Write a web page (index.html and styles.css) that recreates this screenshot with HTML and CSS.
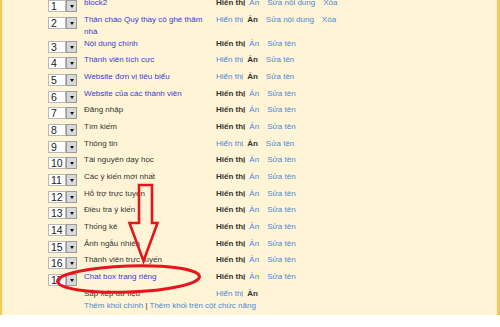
FILE: index.html
```html
<!DOCTYPE html>
<html lang="vi">
<head>
<meta charset="utf-8">
<title>Quản lý khối</title>
<link rel="stylesheet" href="styles.css">
</head>
<body>
<div class="wrap">
  <div class="list">
    <div class="row">
      <div class="sel"><span class="num">1</span><span class="btn"><i></i></span></div>
      <div class="name link">block2</div>
      <div class="acts"><b class="on">Hiển thị</b><a class="off">Ẩn</a><a class="edit">Sửa nội dung</a><a class="del">Xóa</a></div>
    </div>
    <div class="row">
      <div class="sel"><span class="num">2</span><span class="btn"><i></i></span></div>
      <div class="name link">Thân chào Quý thầy cô ghé thăm nhà</div>
      <div class="acts"><a class="on">Hiển thị</a><b class="off">Ẩn</b><a class="edit">Sửa nội dung</a><a class="del">Xóa</a></div>
    </div>
    <div class="row">
      <div class="sel"><span class="num">3</span><span class="btn"><i></i></span></div>
      <div class="name link">Nội dung chính</div>
      <div class="acts"><b class="on">Hiển thị</b><a class="off">Ẩn</a><a class="edit">Sửa tên</a></div>
    </div>
    <div class="row">
      <div class="sel"><span class="num">4</span><span class="btn"><i></i></span></div>
      <div class="name link">Thành viên tích cực</div>
      <div class="acts"><a class="on">Hiển thị</a><b class="off">Ẩn</b><a class="edit">Sửa tên</a></div>
    </div>
    <div class="row">
      <div class="sel"><span class="num">5</span><span class="btn"><i></i></span></div>
      <div class="name link">Website đơn vị tiêu biểu</div>
      <div class="acts"><a class="on">Hiển thị</a><b class="off">Ẩn</b><a class="edit">Sửa tên</a></div>
    </div>
    <div class="row">
      <div class="sel"><span class="num">6</span><span class="btn"><i></i></span></div>
      <div class="name link">Website của các thành viên</div>
      <div class="acts"><b class="on">Hiển thị</b><a class="off">Ẩn</a><a class="edit">Sửa tên</a></div>
    </div>
    <div class="row">
      <div class="sel"><span class="num">7</span><span class="btn"><i></i></span></div>
      <div class="name">Đăng nhập</div>
      <div class="acts"><b class="on">Hiển thị</b><a class="off">Ẩn</a><a class="edit">Sửa tên</a></div>
    </div>
    <div class="row">
      <div class="sel"><span class="num">8</span><span class="btn"><i></i></span></div>
      <div class="name">Tìm kiếm</div>
      <div class="acts"><b class="on">Hiển thị</b><a class="off">Ẩn</a><a class="edit">Sửa tên</a></div>
    </div>
    <div class="row">
      <div class="sel"><span class="num">9</span><span class="btn"><i></i></span></div>
      <div class="name">Thông tin</div>
      <div class="acts"><a class="on">Hiển thị</a><b class="off">Ẩn</b><a class="edit">Sửa tên</a></div>
    </div>
    <div class="row">
      <div class="sel"><span class="num">10</span><span class="btn"><i></i></span></div>
      <div class="name">Tài nguyên dạy học</div>
      <div class="acts"><b class="on">Hiển thị</b><a class="off">Ẩn</a><a class="edit">Sửa tên</a></div>
    </div>
    <div class="row">
      <div class="sel"><span class="num">11</span><span class="btn"><i></i></span></div>
      <div class="name">Các ý kiến mới nhất</div>
      <div class="acts"><b class="on">Hiển thị</b><a class="off">Ẩn</a><a class="edit">Sửa tên</a></div>
    </div>
    <div class="row">
      <div class="sel"><span class="num">12</span><span class="btn"><i></i></span></div>
      <div class="name">Hỗ trợ trực tuyến</div>
      <div class="acts"><b class="on">Hiển thị</b><a class="off">Ẩn</a><a class="edit">Sửa tên</a></div>
    </div>
    <div class="row">
      <div class="sel"><span class="num">13</span><span class="btn"><i></i></span></div>
      <div class="name">Điều tra ý kiến</div>
      <div class="acts"><b class="on">Hiển thị</b><a class="off">Ẩn</a><a class="edit">Sửa tên</a></div>
    </div>
    <div class="row">
      <div class="sel"><span class="num">14</span><span class="btn"><i></i></span></div>
      <div class="name">Thống kê</div>
      <div class="acts"><b class="on">Hiển thị</b><a class="off">Ẩn</a><a class="edit">Sửa tên</a></div>
    </div>
    <div class="row">
      <div class="sel"><span class="num">15</span><span class="btn"><i></i></span></div>
      <div class="name">Ảnh ngẫu nhiên</div>
      <div class="acts"><b class="on">Hiển thị</b><a class="off">Ẩn</a><a class="edit">Sửa tên</a></div>
    </div>
    <div class="row">
      <div class="sel"><span class="num">16</span><span class="btn"><i></i></span></div>
      <div class="name">Thành viên trực tuyến</div>
      <div class="acts"><b class="on">Hiển thị</b><a class="off">Ẩn</a><a class="edit">Sửa tên</a></div>
    </div>
    <div class="row">
      <div class="sel"><span class="num">17</span><span class="btn"><i></i></span></div>
      <div class="name link">Chat box trang riêng</div>
      <div class="acts"><b class="on">Hiển thị</b><a class="off">Ẩn</a><a class="edit">Sửa tên</a></div>
    </div>
    <div class="row last">
      <div class="spacer"></div>
      <div class="name">Sắp xếp dữ liệu</div>
      <div class="acts"><a class="on">Hiển thị</a><b class="off">Ẩn</b></div>
    </div>
    <div class="foot"><a>Thêm khối chính</a> <span class="sep">|</span> <a>Thêm khối trên cột chức năng</a></div>
  </div>
</div>
<svg class="mark" width="500" height="327" viewBox="0 0 500 327" xmlns="http://www.w3.org/2000/svg">
  <polygon points="139,185 152,185 152,223 157.5,223 143.5,261 129.5,223 139,223" fill="none" stroke="#e8141c" stroke-width="2.6" stroke-linejoin="miter"/>
  <ellipse cx="128.5" cy="279" rx="71" ry="13" transform="rotate(-2 128.5 279)" fill="none" stroke="#e8141c" stroke-width="3"/>
</svg>
</body>
</html>
```
FILE: styles.css
```css
html, body {
  margin: 0;
  padding: 0;
  background: #ffffff;
}
body {
  position: relative;
  width: 500px;
  height: 327px;
  overflow: hidden;
  font-family: "Liberation Sans", Arial, sans-serif;
  font-size: 8px;
  color: #333333;
}
.wrap {
  box-sizing: border-box;
  width: 500px;
  height: 315px;
  overflow: hidden;
  background: #fff5d6;
  border-left: 2px solid #f3c955;
  border-right: 3px solid #f3c955;
  padding-left: 46px;
}
.list {
  margin-top: -3px;
}
.row {
  display: flex;
  align-items: flex-start;
  min-height: 16.67px;
}
.row.last {
  min-height: 12px;
}
.sel {
  display: flex;
  width: 29px;
  height: 12px;
  margin-top: 3px;
  flex: none;
}
.spacer {
  width: 29px;
  flex: none;
}
.num {
  box-sizing: border-box;
  width: 18px;
  height: 12px;
  background: #ffffff;
  border: 1px solid #b9b9b9;
  font-size: 10.5px;
  line-height: 10px;
  padding-left: 2px;
  color: #222;
}
.btn {
  box-sizing: border-box;
  width: 11px;
  height: 12px;
  background: #d9d9d9;
  border: 1px solid #9a9a9a;
  display: flex;
  align-items: center;
  justify-content: center;
}
.btn i {
  display: block;
  width: 0;
  height: 0;
  border-left: 2.5px solid transparent;
  border-right: 2.5px solid transparent;
  border-top: 3px solid #111;
  margin-top: 1px;
}
.name {
  width: 132px;
  margin-left: 7px;
  line-height: 12px;
  flex: none;
  color: #333333;
}
.name.link {
  color: #3a3ad4;
}
.acts {
  line-height: 12px;
  white-space: nowrap;
}
.acts a, .acts b {
  display: inline-block;
  text-decoration: none;
}
.acts a {
  color: #4a88d8;
}
.acts b {
  color: #333333;
  font-weight: bold;
}
.acts .off {
  margin-left: 4px;
}
.acts .edit {
  margin-left: 8px;
}
.acts .del {
  margin-left: 8px;
}
.foot {
  margin-left: 36px;
  line-height: 12px;
  color: #4a88d8;
}
.foot a {
  color: #4a88d8;
}
.foot .sep {
  color: #333;
}
.mark {
  position: absolute;
  left: 0;
  top: 0;
  pointer-events: none;
}
```
